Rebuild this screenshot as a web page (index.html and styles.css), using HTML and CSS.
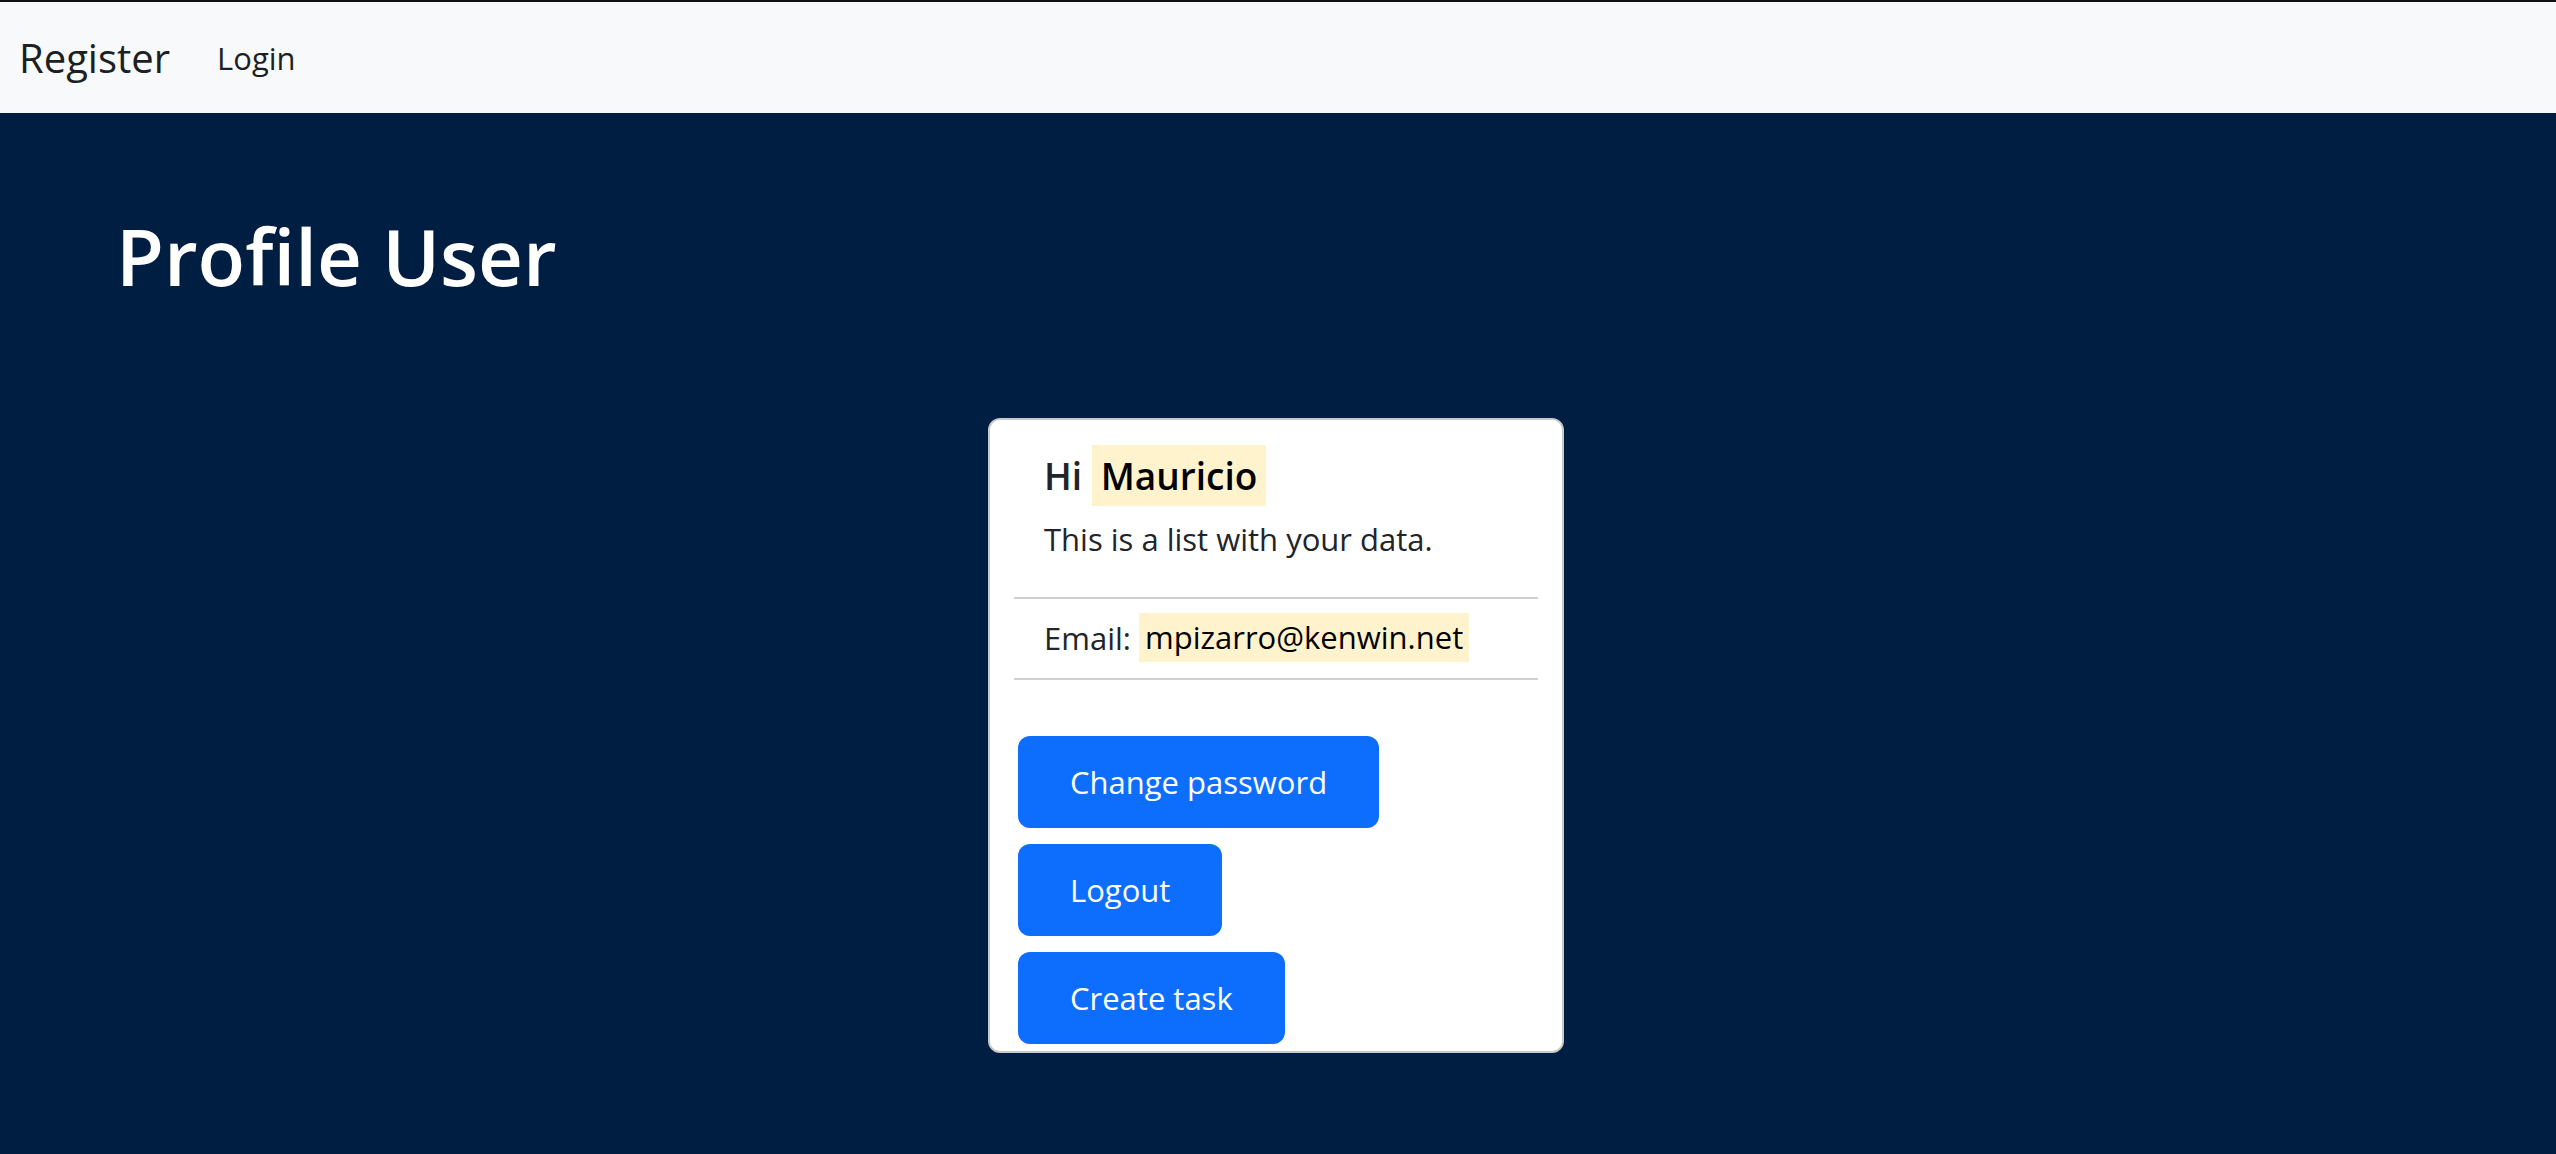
FILE: index.html
```html
<!DOCTYPE html>
<html lang="en">
<head>
<meta charset="utf-8">
<title>Profile User</title>
<link rel="stylesheet" href="styles.css">
</head>
<body>
<nav class="navbar">
  <a class="brand" href="#">Register</a>
  <a class="nav-link" href="#">Login</a>
</nav>
<main class="main">
  <h1 class="title">Profile User</h1>
  <section class="card-wrap">
    <div class="card">
      <div class="card-head">
        <h5 class="greeting">Hi <mark class="mark mark-lg">Mauricio</mark></h5>
        <p class="lead-text">This is a list with your data.</p>
      </div>
      <hr class="divider divider-first">
      <div class="data-row">Email: <mark class="mark">mpizarro@kenwin.net</mark></div>
      <hr class="divider divider-second">
      <div class="actions">
        <button class="btn">Change password</button>
        <button class="btn">Logout</button>
        <button class="btn">Create task</button>
      </div>
    </div>
  </section>
</main>
</body>
</html>
```
FILE: styles.css
```css
* { box-sizing: border-box; }
html, body { margin: 0; padding: 0; }
body {
  background: #001d42;
  font-family: "Open Sans", "Noto Sans", sans-serif;
  color: #212529;
  min-height: 1154px;
}
.navbar {
  height: 113px;
  border-top: 2px solid #111;
  background: #f8f9fa;
  display: flex;
  align-items: center;
  padding-left: 19px;
}
.brand {
  font-size: 40px;
  color: #1c1f23;
  text-decoration: none;
  margin-right: 47px;
}
.nav-link {
  font-size: 31px;
  color: #1c1f23;
  text-decoration: none;
}
.main {
  padding-top: 1px;
}
.title {
  margin: 94px 0 0 116px;
  font-size: 78px;
  font-weight: 600;
  line-height: 96px;
  color: #fff;
}
.card-wrap {
  padding-left: 988px;
  margin-top: 114px;
}
.card {
  width: 576px;
  height: 635px;
  background: #fff;
  border: 2px solid #c9c9c9;
  border-radius: 12px;
  padding: 0 24px;
}
.card-head {
  padding: 32px 0 0 30px;
}
.greeting {
  margin: 0;
  font-size: 37px;
  font-weight: 600;
  line-height: 48px;
}
.mark {
  background: #fff3cd;
  color: #000;
  padding: 3.4px 6px;
}
.mark-lg {
  padding: 5px 9px;
}
.lead-text {
  margin: 16px 0 0;
  font-size: 31px;
  line-height: 46.5px;
}
.divider {
  margin: 0;
  border: 0;
  border-top: 2px solid #d0d0d0;
}
.divider-first { margin-top: 34px; }
.divider-second { margin-top: 17px; }
.data-row {
  padding: 16px 0 0 30px;
  font-size: 31px;
  line-height: 46.5px;
}
.actions {
  display: flex;
  flex-direction: column;
  align-items: flex-start;
  gap: 16px;
  padding: 56px 0 0 4px;
}
.btn {
  font-family: inherit;
  font-size: 31px;
  line-height: 46px;
  padding: 23px 52px;
  color: #fff;
  background: #0d6efd;
  border: 0;
  border-radius: 12px;
  cursor: pointer;
}
```
